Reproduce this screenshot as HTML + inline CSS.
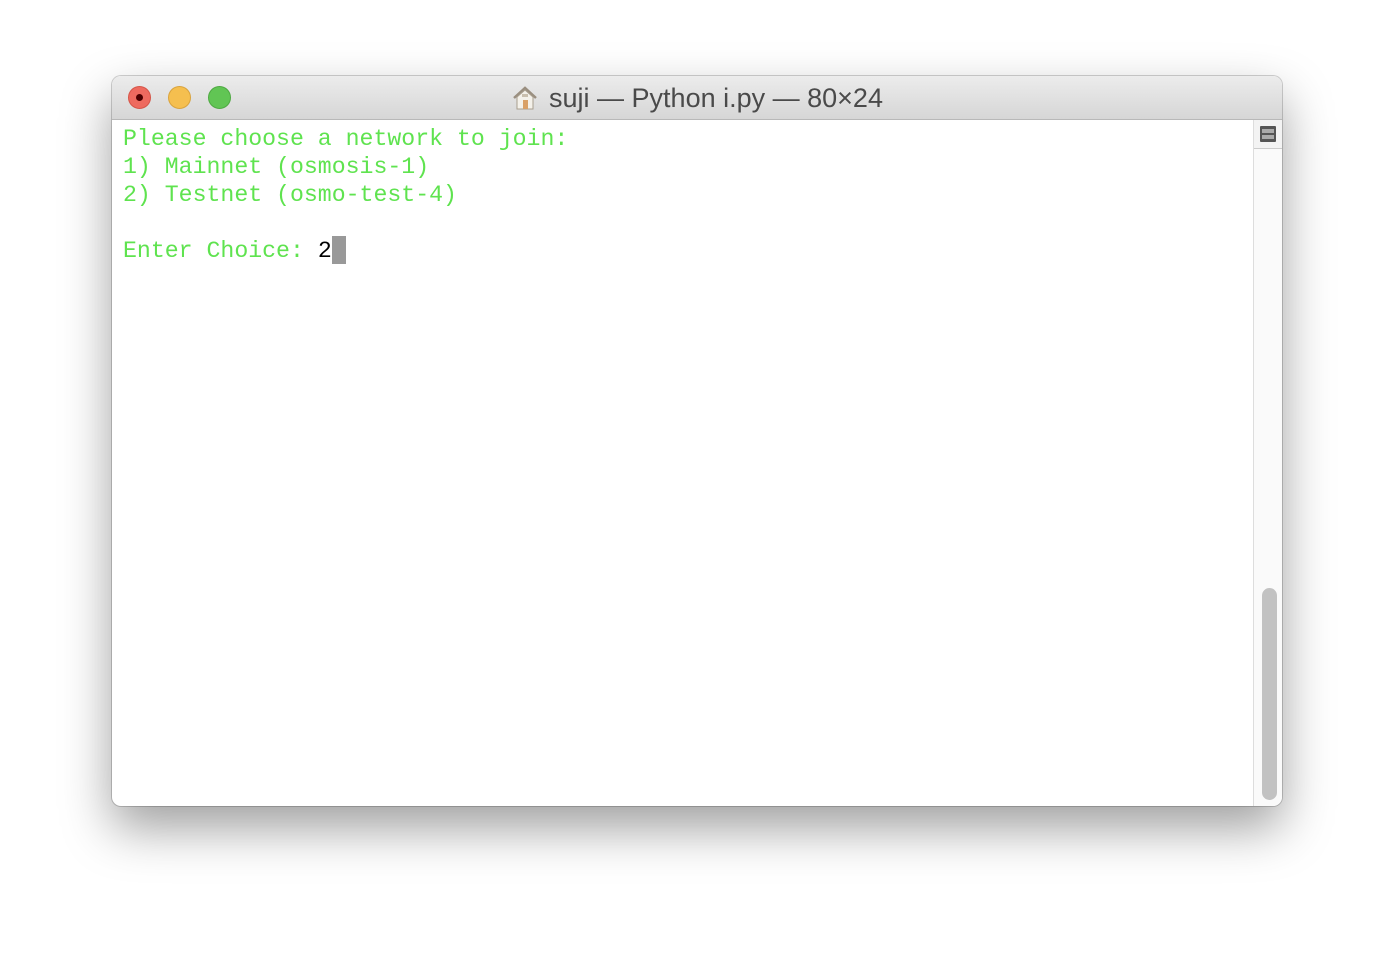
<!DOCTYPE html>
<html><head><style>
body{margin:0;width:1394px;height:954px;background:#fff;position:relative;overflow:hidden;font-family:"Liberation Sans",sans-serif}
.win{position:absolute;left:112px;top:76px;width:1170px;height:730px;border-radius:9px;background:#fff;box-shadow:0 22px 50px rgba(0,0,0,.38),0 0 0 1px rgba(0,0,0,.18);overflow:hidden}
.tb{position:absolute;left:0;top:0;width:100%;height:43px;background:linear-gradient(#ececec,#d6d6d6);border-bottom:1px solid #b8b8b8}
.dot{position:absolute;top:10px;width:23px;height:23px;border-radius:50%;box-sizing:border-box}
.title{position:absolute;left:0;right:0;top:7px;text-align:center;font-size:27px;color:#4a4a4a}
.term{position:absolute;left:11px;top:49px;font-family:"Liberation Mono",monospace;font-size:23.2px;line-height:28px;color:#5fe34f;white-space:pre}
.sb{position:absolute;left:1141px;top:44px;width:29px;height:686px;background:#fafafa;border-left:1px solid #ddd}
.thumb{position:absolute;left:8px;top:468px;width:15px;height:212px;border-radius:8px;background:#c2c2c2}
.split{position:absolute;left:0;top:0;width:29px;height:28px;border-bottom:1px solid #ccc;background:#f3f3f3}
</style></head><body>
<div class="win">
<div class="tb">
<div class="dot" style="left:16px;background:#ee6a5f;border:1px solid #d55548"><div style="position:absolute;left:7px;top:7px;width:7px;height:7px;border-radius:50%;background:#4d0000"></div></div>
<div class="dot" style="left:56px;background:#f5bf4f;border:1px solid #d9a33d"></div>
<div class="dot" style="left:96px;background:#61c554;border:1px solid #4ea942"></div>
<div class="title"><svg width="28" height="26" viewBox="0 0 28 26" style="vertical-align:-4px;margin-right:10px"><path d="M3 13 L14 3 L25 13" fill="none" stroke="#9a8f80" stroke-width="2.5"/><path d="M6 12 L14 5 L22 12 V24 H6Z" fill="#f4f1ea" stroke="#a89e8e"/><rect x="12" y="15" width="5" height="9" fill="#d9a066"/><rect x="11" y="9" width="6" height="3" fill="#c9bfae"/></svg>suji — Python i.py — 80×24</div>
</div>
<div class="term">Please choose a network to join:
1) Mainnet (osmosis-1)
2) Testnet (osmo-test-4)

Enter Choice: <span style="color:#000">2</span><span style="display:inline-block;width:14px;height:28px;background:#999;vertical-align:top;margin-top:-1px"></span></div>
<div class="sb"><div class="split"><div style="position:absolute;left:6px;top:6px;width:16px;height:16px;background:#555;border-radius:1px"><div style="position:absolute;left:2px;top:3px;width:12px;height:4px;background:#aaa"></div><div style="position:absolute;left:2px;top:9px;width:12px;height:4px;background:#aaa"></div></div></div><div class="thumb"></div></div>
</div>
</body></html>
